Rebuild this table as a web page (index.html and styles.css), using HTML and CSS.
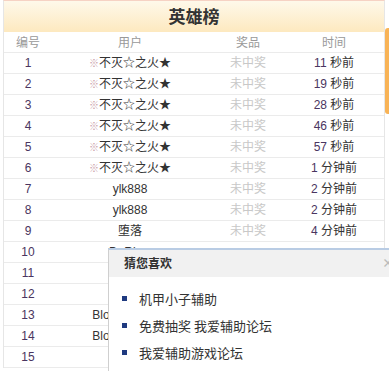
FILE: index.html
```html
<!DOCTYPE html>
<html>
<head>
<meta charset="utf-8">
<link rel="stylesheet" href="styles.css">
</head>
<body>
<div class="board">
  <div class="title">英雄榜</div>
  <div class="row head"><span>编号</span><span>用户</span><span>奖品</span><span>时间</span></div>
  <div class="row"><span class="num">1</span><span class="user"><i>※</i>不灭☆之火★</span><span class="prize">未中奖</span><span class="time"><b>11</b> 秒前</span></div>
  <div class="row"><span class="num">2</span><span class="user"><i>※</i>不灭☆之火★</span><span class="prize">未中奖</span><span class="time"><b>19</b> 秒前</span></div>
  <div class="row"><span class="num">3</span><span class="user"><i>※</i>不灭☆之火★</span><span class="prize">未中奖</span><span class="time"><b>28</b> 秒前</span></div>
  <div class="row"><span class="num">4</span><span class="user"><i>※</i>不灭☆之火★</span><span class="prize">未中奖</span><span class="time"><b>46</b> 秒前</span></div>
  <div class="row"><span class="num">5</span><span class="user"><i>※</i>不灭☆之火★</span><span class="prize">未中奖</span><span class="time"><b>57</b> 秒前</span></div>
  <div class="row"><span class="num">6</span><span class="user"><i>※</i>不灭☆之火★</span><span class="prize">未中奖</span><span class="time"><b>1</b> 分钟前</span></div>
  <div class="row"><span class="num">7</span><span class="user">ylk888</span><span class="prize">未中奖</span><span class="time"><b>2</b> 分钟前</span></div>
  <div class="row"><span class="num">8</span><span class="user">ylk888</span><span class="prize">未中奖</span><span class="time"><b>2</b> 分钟前</span></div>
  <div class="row"><span class="num">9</span><span class="user">堕落</span><span class="prize">未中奖</span><span class="time"><b>4</b> 分钟前</span></div>
  <div class="row"><span class="num">10</span><span class="user">DaRk丶</span><span></span><span></span></div>
  <div class="row"><span class="num">11</span><span></span><span></span><span></span></div>
  <div class="row"><span class="num">12</span><span></span><span></span><span></span></div>
  <div class="row"><span class="num">13</span><span class="user">Bloody丶Mary</span><span></span><span></span></div>
  <div class="row"><span class="num">14</span><span class="user">Bloody丶Mary</span><span></span><span></span></div>
  <div class="row"><span class="num">15</span><span></span><span></span><span></span></div>
</div>
<div class="scroll"></div>
<div class="popup">
  <div class="pop-head"><span>猜您喜欢</span><span class="close">×</span></div>
  <ul class="pop-list">
    <li>机甲小子辅助</li>
    <li>免费抽奖 我爱辅助论坛</li>
    <li>我爱辅助游戏论坛</li>
  </ul>
</div>
</body>
</html>
```
FILE: styles.css
```css
html, body {
  margin: 0;
  padding: 0;
  background: #fff;
  overflow: hidden;
}
body {
  width: 389px;
  height: 371px;
  position: relative;
  font-family: "Liberation Sans", "Noto Sans CJK SC", sans-serif;
  font-size: 12px;
  color: #333;
}
.board {
  margin-left: 3px;
  width: 380px;
  border-left: 1px solid #e6e6e6;
  border-right: 1px solid #e6e6e6;
  border-top: 1px solid #f6d2c4;
}
.title {
  height: 31px;
  line-height: 30px;
  text-align: center;
  font-family: "Noto Sans CJK SC", sans-serif;
  font-weight: bold;
  font-size: 17px;
  color: #333;
  background: linear-gradient(#fef8ea, #fde9bf);
}
.row {
  display: grid;
  grid-template-columns: 48px 156px 80px 1fr;
  height: 20px;
  line-height: 20px;
  border-bottom: 1px solid #ebebeb;
  text-align: center;
  white-space: nowrap;
}
.row > span:last-child {
  padding-right: 4px;
}
.head {
  color: #999;
  font-family: "Noto Sans CJK SC", sans-serif;
  font-size: 12px;
}
.num {
  color: #4a3560;
}
.user i {
  font-style: normal;
  color: #c9a0a8;
  font-size: 10px;
}
.prize {
  color: #c8c8c8;
}
.time b {
  font-weight: normal;
  color: #4a3560;
}
.scroll {
  position: absolute;
  right: 0;
  top: 28px;
  width: 4px;
  height: 86px;
  border-radius: 3px 0 0 3px;
  background: #f8b356;
}
.popup {
  position: absolute;
  left: 108px;
  top: 248px;
  right: 0;
  bottom: 0;
  overflow: hidden;
  background: #fff;
  border-top: 2px solid #b9cce4;
  border-left: 1px solid #cfcfcf;
}
.pop-head {
  display: flex;
  justify-content: space-between;
  height: 27px;
  line-height: 26px;
  background: #f1f1f1;
  padding-left: 15px;
  font-family: "Noto Sans CJK SC", sans-serif;
  font-weight: bold;
  font-size: 12px;
  color: #333;
}
.close {
  color: #bbb;
  font-weight: bold;
  margin-right: -5px;
}
.pop-list {
  list-style: none;
  margin: 0;
  padding: 8px 0 0 13px;
}
.pop-list li {
  height: 27px;
  line-height: 27px;
  font-family: "Noto Sans CJK SC", sans-serif;
  font-size: 13px;
  color: #333;
  display: flex;
  align-items: center;
  gap: 12px;
}
.pop-list li::before {
  content: "";
  width: 5px;
  height: 5px;
  background: #1f3a80;
  flex: none;
}
```
